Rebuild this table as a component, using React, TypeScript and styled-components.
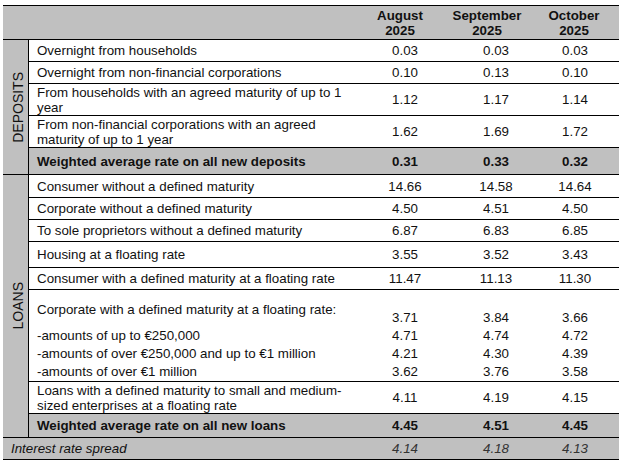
import styled, { createGlobalStyle } from "styled-components";

const GlobalStyle = createGlobalStyle`
  body {
    margin: 0;
    background: #ffffff;
    font-family: "Liberation Sans", Arial, sans-serif;
  }
`;

type Line = {
  label: string;
  values: string[];
  h: number;
};

const depositRows: Line[] = [
  { label: "Overnight from households", values: ["0.03", "0.03", "0.03"], h: 22 },
  { label: "Overnight from non-financial corporations", values: ["0.10", "0.13", "0.10"], h: 22 },
  { label: "From households with an agreed maturity of up to 1 year", values: ["1.12", "1.17", "1.14"], h: 32 },
  { label: "From non-financial corporations with an agreed maturity of up to 1 year", values: ["1.62", "1.69", "1.72"], h: 32 },
];

const loanRowsTop: Line[] = [
  { label: "Consumer without a defined maturity", values: ["14.66", "14.58", "14.64"], h: 23 },
  { label: "Corporate without a defined maturity", values: ["4.50", "4.51", "4.50"], h: 22 },
  { label: "To sole proprietors without a defined maturity", values: ["6.87", "6.83", "6.85"], h: 22 },
  { label: "Housing at a floating rate", values: ["3.55", "3.52", "3.43"], h: 26 },
  { label: "Consumer with a defined maturity at a floating rate", values: ["11.47", "11.13", "11.30"], h: 22 },
];

const corporateAmounts = [
  "-amounts of up to €250,000",
  "-amounts of over €250,000 and up to €1 million",
  "-amounts of over €1 million",
];
const corporateValues = [
  ["3.71", "4.71", "4.21", "3.62"],
  ["3.84", "4.74", "4.30", "3.76"],
  ["3.66", "4.72", "4.39", "3.58"],
];

const smeRow: Line = {
  label: "Loans with a defined maturity to small and medium-sized enterprises at a floating rate",
  values: ["4.11", "4.19", "4.15"],
  h: 32,
};

const months = [
  { name: "August", pad: 10 },
  { name: "September", pad: 18 },
  { name: "October", pad: 11 },
];
const dataPad = [0, 0, 9];

function App() {
  return (
    <>
      <GlobalStyle />
      <RatesTable>
        <colgroup>
          <col style={{ width: 26 }} />
          <col style={{ width: 329 }} />
          <col style={{ width: 94 }} />
          <col style={{ width: 88 }} />
          <col style={{ width: 79 }} />
        </colgroup>
        <tbody>
          <Row $h={34}>
            <HeadCell colSpan={2} $pr={0} />
            {months.map((m) => (
              <HeadCell key={m.name} $pr={m.pad}>
                {m.name}
                <br />
                2025
              </HeadCell>
            ))}
          </Row>

          {depositRows.map((r, i) => (
            <Row key={r.label} $h={r.h}>
              {i === 0 && (
                <SectionCell rowSpan={depositRows.length + 1}>
                  <SectionName>DEPOSITS</SectionName>
                </SectionCell>
              )}
              <LabelCell>{r.label}</LabelCell>
              {r.values.map((v, j) => (
                <NumCell key={j} $pr={dataPad[j]}>
                  {v}
                </NumCell>
              ))}
            </Row>
          ))}
          <Row $h={27}>
            <LabelCell $shade $bold>
              Weighted average rate on all new deposits
            </LabelCell>
            {["0.31", "0.33", "0.32"].map((v, j) => (
              <NumCell key={j} $pr={dataPad[j]} $shade $bold>
                {v}
              </NumCell>
            ))}
          </Row>

          {loanRowsTop.map((r, i) => (
            <Row key={r.label} $h={r.h}>
              {i === 0 && (
                <SectionCell rowSpan={loanRowsTop.length + 3}>
                  <SectionName>LOANS</SectionName>
                </SectionCell>
              )}
              <LabelCell>{r.label}</LabelCell>
              {r.values.map((v, j) => (
                <NumCell key={j} $pr={dataPad[j]}>
                  {v}
                </NumCell>
              ))}
            </Row>
          ))}

          <Row $h={92}>
            <BlockLabelCell>
              <BlockTitle>Corporate with a defined maturity at a floating rate:</BlockTitle>
              {corporateAmounts.map((a) => (
                <BlockLine key={a}>{a}</BlockLine>
              ))}
            </BlockLabelCell>
            {corporateValues.map((col, j) => (
              <BlockNumCell key={j} $pr={dataPad[j]}>
                {col.map((v, k) => (
                  <BlockLine key={k}>{v}</BlockLine>
                ))}
              </BlockNumCell>
            ))}
          </Row>

          <Row $h={smeRow.h}>
            <LabelCell>{smeRow.label}</LabelCell>
            {smeRow.values.map((v, j) => (
              <NumCell key={j} $pr={dataPad[j]}>
                {v}
              </NumCell>
            ))}
          </Row>

          <Row $h={24}>
            <LabelCell $shade $bold>
              Weighted average rate on all new loans
            </LabelCell>
            {["4.45", "4.51", "4.45"].map((v, j) => (
              <NumCell key={j} $pr={dataPad[j]} $shade $bold>
                {v}
              </NumCell>
            ))}
          </Row>

          <Row $h={22}>
            <LabelCell colSpan={2} $shade $italic>
              Interest rate spread
            </LabelCell>
            {["4.14", "4.18", "4.13"].map((v, j) => (
              <NumCell key={j} $pr={dataPad[j]} $shade $italic>
                {v}
              </NumCell>
            ))}
          </Row>
        </tbody>
      </RatesTable>
    </>
  );
}

export default App;

const RatesTable = styled.table`
  margin: 5px 0 0 3px;
  width: 616px;
  table-layout: fixed;
  border-collapse: separate;
  border-spacing: 0;
  border-top: 1px solid #000;
  font-size: 13.33px;
  color: #111;
`;

const Row = styled.tr<{ $h: number }>`
  height: ${(p) => p.$h}px;
`;

const HeadCell = styled.td<{ $pr: number }>`
  background: #c0c0c0;
  border-bottom: 1px solid #000;
  padding: 0 ${(p) => p.$pr}px 0 0;
  text-align: center;
  vertical-align: middle;
  font-weight: bold;
  line-height: 15px;
`;

const SectionCell = styled.td`
  background: #c0c0c0;
  border-right: 1px solid #000;
  border-bottom: 1px solid #000;
  padding: 0 0 0 5px;
  vertical-align: middle;
`;

const SectionName = styled.div`
  writing-mode: vertical-rl;
  transform: rotate(180deg);
  font-size: 14px;
  line-height: 16px;
  margin: 0 auto;
`;

type CellProps = { $shade?: boolean; $bold?: boolean; $italic?: boolean };

const LabelCell = styled.td<CellProps>`
  background: ${(p) => (p.$shade ? "#c0c0c0" : "#ffffff")};
  border-bottom: 1px solid #000;
  padding: 0 6px 0 8px;
  vertical-align: middle;
  line-height: 15px;
  font-weight: ${(p) => (p.$bold ? "bold" : "normal")};
  font-style: ${(p) => (p.$italic ? "italic" : "normal")};
`;

const NumCell = styled.td<CellProps & { $pr: number }>`
  background: ${(p) => (p.$shade ? "#c0c0c0" : "#ffffff")};
  border-bottom: 1px solid #000;
  padding: 0 ${(p) => p.$pr}px 0 0;
  text-align: center;
  vertical-align: middle;
  line-height: 15px;
  font-weight: ${(p) => (p.$bold ? "bold" : "normal")};
  font-style: ${(p) => (p.$italic ? "italic" : "normal")};
  color: ${(p) => (p.$italic ? "#333" : "inherit")};
`;

const BlockLabelCell = styled.td`
  border-bottom: 1px solid #000;
  padding: 0 6px 0 8px;
  vertical-align: bottom;
`;

const BlockTitle = styled.div`
  line-height: 15px;
  margin-bottom: 10px;
`;

const BlockLine = styled.div`
  line-height: 18px;
`;

const BlockNumCell = styled.td<{ $pr: number }>`
  border-bottom: 1px solid #000;
  padding: 0 ${(p) => p.$pr}px 0 0;
  text-align: center;
  vertical-align: bottom;
`;
